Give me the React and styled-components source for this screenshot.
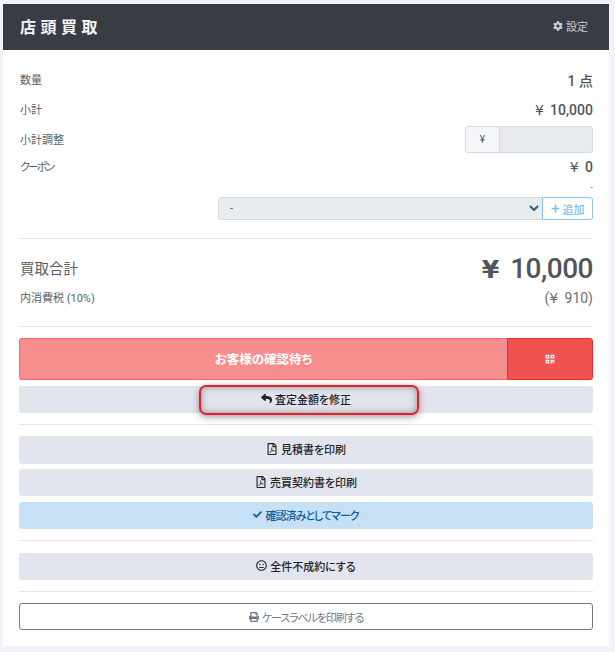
import React from 'react';
import styled, { createGlobalStyle } from 'styled-components';
import { FaCog, FaPlus, FaReply, FaRegFilePdf, FaCheck, FaRegMeh, FaPrint, FaQrcode } from 'react-icons/fa';

const GlobalStyle = createGlobalStyle`
  html, body {
    margin: 0;
    padding: 0;
    background: #f1f3f8;
  }
  body {
    font-family: Roboto, "Noto Sans CJK JP", sans-serif;
    font-feature-settings: "palt";
    color: #50555c;
  }
  button, select {
    font-feature-settings: "palt";
  }
  * {
    box-sizing: border-box;
  }
`;

const Page = styled.div`
  position: relative;
  width: 615px;
  height: 652px;
  padding: 4px 6px 6px 3px;
`;

const Card = styled.div`
  background: #fff;
  height: 642px;
`;

const Header = styled.div`
  height: 46px;
  background: #383c44;
  display: flex;
  align-items: center;
  justify-content: space-between;
  padding: 0 21px 2px 17px;
`;

const Title = styled.h1`
  margin: 0;
  font-size: 16px;
  font-weight: 700;
  letter-spacing: 4.5px;
  color: #f4f5f7;
`;

const Settings = styled.div`
  display: flex;
  align-items: center;
  gap: 3px;
  font-size: 11px;
  color: #c9ccd1;
`;

const Body = styled.div`
  padding: 15px 16px 0;
`;

const Row = styled.div`
  display: flex;
  align-items: center;
  justify-content: space-between;
  height: ${({ $h }) => $h || 30}px;
`;

const Label = styled.span`
  margin-left: 1px;
  font-size: 11px;
  letter-spacing: ${({ $spacing }) => $spacing || 0}px;
  color: #5a5f66;
  transform: translateY(-1px);
`;

const Value = styled.span`
  font-size: 14px;
  font-weight: 500;
  color: #50555c;
  white-space: pre;
`;

const Yen = styled.span`
  font-family: "DejaVu Sans", sans-serif;
  font-weight: ${({ $strong }) => ($strong ? 700 : 400)};
  font-size: ${({ $strong }) => ($strong ? '0.9em' : '1em')};
  margin-right: 0.2em;
`;

const InputGroup = styled.div`
  display: flex;
  width: 128px;
  height: 27px;
`;

const Prefix = styled.span`
  width: 35px;
  display: flex;
  align-items: center;
  justify-content: center;
  font-size: 10px;
  color: #50555c;
  background: #f4f6f9;
  border: 1px solid #d4d9e2;
  border-radius: 3px 0 0 3px;
`;

const AmountInput = styled.input`
  flex: 1;
  min-width: 0;
  margin-left: -1px;
  background: #e9ecef;
  border: 1px solid #d4d9e2;
  border-radius: 0 3px 3px 0;
`;

const Dash = styled.div`
  text-align: right;
  font-size: 10px;
  line-height: 15px;
  color: #8a8f96;
`;

const CouponRow = styled.div`
  display: flex;
  justify-content: flex-end;
  height: 23px;
  margin-top: 2px;
`;

const CouponSelect = styled.select`
  width: 325px;
  height: 23px;
  padding: 0 7px;
  font-family: inherit;
  font-size: 11px;
  color: #50555c;
  background-color: #e9ecef;
  border: 1px solid #d4d9e2;
  border-radius: 3px 0 0 3px;
  opacity: 1;
`;

const AddButton = styled.button`
  position: relative;
  width: 51px;
  height: 23px;
  margin-left: -1px;
  padding: 0;
  display: flex;
  align-items: center;
  justify-content: center;
  gap: 3px;
  font-family: inherit;
  font-size: 11px;
  font-weight: 500;
  color: #7fbcef;
  background: #fff;
  border: 1px solid #8cc3f0;
  border-radius: 0 3px 3px 0;
`;

const Rule = styled.hr`
  margin: ${({ $top }) => $top ?? 11}px 0 ${({ $bottom }) => $bottom ?? 11}px;
  border: 0;
  border-top: 1px solid #e4e6ee;
`;

const TotalLabel = styled.span`
  margin-left: 1px;
  font-size: 14.5px;
  color: #5a5f66;
  transform: translateY(-1px);
`;

const TotalValue = styled.span`
  font-size: 28px;
  font-weight: 500;
  letter-spacing: -0.5px;
  color: #50555c;
  white-space: pre;
`;

const TaxValue = styled.span`
  font-size: 14px;
  color: #6a6f76;
  white-space: pre;
`;

const StatusGroup = styled.div`
  display: flex;
  height: 42px;
  margin-bottom: 6px;
`;

const StatusText = styled.div`
  flex: 1;
  display: flex;
  align-items: center;
  justify-content: center;
  padding-bottom: 2px;
  font-size: 12.5px;
  font-weight: 700;
  color: #fff;
  background: #f68e8e;
  border: 1px solid #f26a6a;
  border-right: 0;
  border-radius: 3px 0 0 3px;
`;

const QrButton = styled.div`
  width: 86px;
  display: flex;
  align-items: center;
  justify-content: center;
  font-size: 11px;
  color: #fff;
  background: #f0534f;
  border: 1px solid #ee2a26;
  border-radius: 0 3px 3px 0;
`;

const ActionButton = styled.button`
  display: flex;
  align-items: center;
  justify-content: center;
  gap: 3px;
  width: 100%;
  height: ${({ $h }) => $h || 27}px;
  margin-bottom: ${({ $gap }) => $gap ?? 6}px;
  padding: 0 0 2px;
  font-family: inherit;
  font-size: 11px;
  font-weight: 500;
  letter-spacing: ${({ $spacing }) => $spacing || 0}px;
  color: ${({ $info }) => ($info ? '#0f5c9e' : '#1f2329')};
  background: ${({ $info }) => ($info ? '#c6e1f6' : '#e2e5ed')};
  border: 0;
  border-radius: 3px;
`;

const OutlineButton = styled.button`
  display: flex;
  align-items: center;
  justify-content: center;
  gap: 3px;
  width: 100%;
  height: 27px;
  padding: 0;
  font-family: inherit;
  font-size: 11px;
  letter-spacing: -1.1px;
  color: #707a8a;
  background: #fff;
  border: 1px solid #707a8a;
  border-radius: 3px;
`;

// red annotation marker drawn over the button
const Highlight = styled.div`
  position: absolute;
  left: 199px;
  top: 385px;
  width: 220px;
  height: 30px;
  border: 2px solid #ee1c25;
  border-radius: 7px;
  box-shadow: 0 2px 7px rgba(60, 64, 75, 0.5), inset 0 0 7px rgba(60, 64, 75, 0.5);
`;

export default function App() {
  return (
    <Page>
      <GlobalStyle />
      <Card>
        <Header>
          <Title>店頭買取</Title>
          <Settings>
            <FaCog size={10} />
            設定
          </Settings>
        </Header>
        <Body>
          <Row>
            <Label>数量</Label>
            <Value>1 点</Value>
          </Row>
          <Row>
            <Label>小計</Label>
            <Value><Yen>¥</Yen> 10,000</Value>
          </Row>
          <Row $h={29}>
            <Label>小計調整</Label>
            <InputGroup>
              <Prefix>¥</Prefix>
              <AmountInput disabled />
            </InputGroup>
          </Row>
          <Row $h={26}>
            <Label $spacing={-2}>クーポン</Label>
            <Value><Yen>¥</Yen> 0</Value>
          </Row>
          <Dash>-</Dash>
          <CouponRow>
            <CouponSelect disabled defaultValue="-">
              <option>-</option>
            </CouponSelect>
            <AddButton disabled>
              <FaPlus size={9} />
              追加
            </AddButton>
          </CouponRow>
          <Rule $top={18} $bottom={14} />
          <Row $h={30}>
            <TotalLabel>買取合計</TotalLabel>
            <TotalValue><Yen $strong>¥</Yen> 10,000</TotalValue>
          </Row>
          <Row $h={30}>
            <Label>内消費税 (10%)</Label>
            <TaxValue>(<Yen>¥</Yen> 910)</TaxValue>
          </Row>
          <Rule $top={13} />
          <StatusGroup>
            <StatusText>お客様の確認待ち</StatusText>
            <QrButton>
              <FaQrcode size={10} />
            </QrButton>
          </StatusGroup>
          <ActionButton $gap={0}>
            <FaReply size={11} />
            査定金額を修正
          </ActionButton>
          <Rule />
          <ActionButton $h={28} $gap={5}>
            <FaRegFilePdf size={12} />
            見積書を印刷
          </ActionButton>
          <ActionButton>
            <FaRegFilePdf size={12} />
            売買契約書を印刷
          </ActionButton>
          <ActionButton $info $gap={0} $spacing={-1}>
            <FaCheck size={9} />
            確認済みとしてマーク
          </ActionButton>
          <Rule $bottom={12} />
          <ActionButton $gap={0}>
            <FaRegMeh size={11} />
            全件不成約にする
          </ActionButton>
          <Rule />
          <OutlineButton>
            <FaPrint size={10} />
            ケースラベルを印刷する
          </OutlineButton>
        </Body>
      </Card>
      <Highlight />
    </Page>
  );
}
